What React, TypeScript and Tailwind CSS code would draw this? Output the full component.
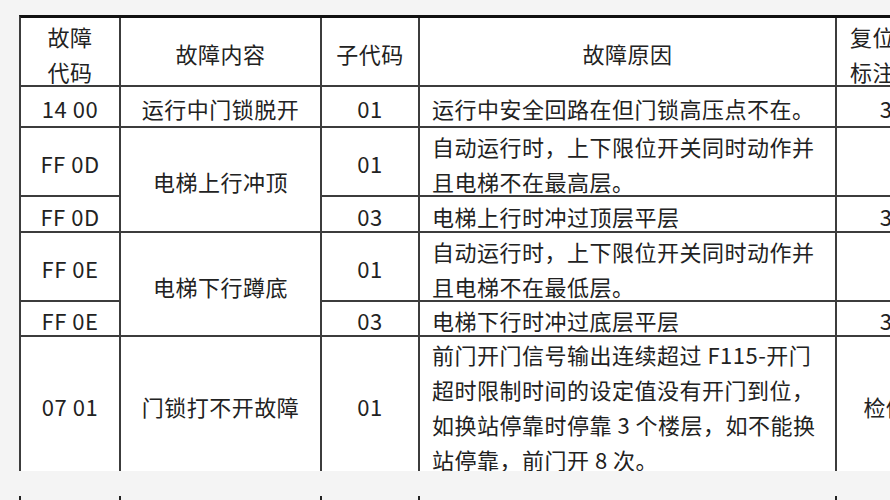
const cols = "grid grid-cols-[100px_201px_98px_417px_100px]";
const cell = "border-r-2 border-b-2 border-[#3c3c3c] flex items-center overflow-hidden pt-[4px]";
const tall = "border-r-2 border-b-2 border-[#3c3c3c] flex items-start overflow-hidden";

function Lines({ lines }: { lines: string[] }) {
  return (
    <div className="flex flex-col">
      {lines.map((l) => (
        <span key={l} className="whitespace-nowrap leading-[35px]">
          {l}
        </span>
      ))}
    </div>
  );
}

export default function App() {
  return (
    <div className="w-[890px] h-[500px] overflow-hidden bg-[#f4f4f4] pt-[15px] pl-[19px] font-['Noto_Sans_CJK_SC','Noto_Sans',sans-serif] text-[22px] tracking-[0.5px] text-[#222]">
      {/* 表格主体（底部被截断） */}
      <div className="h-[456px] w-[940px] overflow-hidden">
        <div
          className={`${cols} grid-rows-[69px_41px_69px_36px_69px_35px_160px] w-[918px] bg-white border-t-[3px] border-l-2 border-t-[#111] border-l-[#3c3c3c]`}
        >
          {/* 表头 */}
          <div className={`${cell} justify-center text-center`}>
            <Lines lines={["故障", "代码"]} />
          </div>
          <div className={`${cell} justify-center`}>故障内容</div>
          <div className={`${cell} justify-center`}>子代码</div>
          <div className={`${cell} justify-center`}>故障原因</div>
          <div className={`${cell} pl-[13px]`}>
            <Lines lines={["复位", "标注"]} />
          </div>

          {/* 14 00 */}
          <div className={`${cell} justify-center`}>14 00</div>
          <div className={`${cell} justify-center`}>运行中门锁脱开</div>
          <div className={`${cell} justify-center`}>01</div>
          <div className={`${cell} pl-[12px] whitespace-nowrap`}>运行中安全回路在但门锁高压点不在。</div>
          <div className={`${cell} justify-center`}>3</div>

          {/* FF 0D */}
          <div className={`${cell} justify-center`}>FF 0D</div>
          <div className={`${cell} justify-center row-span-2`}>电梯上行冲顶</div>
          <div className={`${cell} justify-center`}>01</div>
          <div className={`${cell} pl-[12px]`}>
            <Lines lines={["自动运行时，上下限位开关同时动作并", "且电梯不在最高层。"]} />
          </div>
          <div className={`${cell}`} />
          <div className={`${cell} justify-center`}>FF 0D</div>
          <div className={`${cell} justify-center`}>03</div>
          <div className={`${cell} pl-[12px] whitespace-nowrap`}>电梯上行时冲过顶层平层</div>
          <div className={`${cell} justify-center`}>3</div>

          {/* FF 0E */}
          <div className={`${cell} justify-center`}>FF 0E</div>
          <div className={`${cell} justify-center row-span-2`}>电梯下行蹲底</div>
          <div className={`${cell} justify-center`}>01</div>
          <div className={`${cell} pl-[12px]`}>
            <Lines lines={["自动运行时，上下限位开关同时动作并", "且电梯不在最低层。"]} />
          </div>
          <div className={`${cell}`} />
          <div className={`${cell} justify-center`}>FF 0E</div>
          <div className={`${cell} justify-center`}>03</div>
          <div className={`${cell} pl-[12px] whitespace-nowrap`}>电梯下行时冲过底层平层</div>
          <div className={`${cell} justify-center`}>3</div>

          {/* 07 01 */}
          <div className={`${tall} justify-center pt-[53px]`}>07 01</div>
          <div className={`${tall} justify-center pt-[53px]`}>门锁打不开故障</div>
          <div className={`${tall} justify-center pt-[53px]`}>01</div>
          <div className={`${tall} pl-[12px]`}>
            <Lines
              lines={[
                "前门开门信号输出连续超过 F115-开门",
                "超时限制时间的设定值没有开门到位，",
                "如换站停靠时停靠 3 个楼层，如不能换",
                "站停靠，前门开 8 次。",
              ]}
            />
          </div>
          <div className={`${tall} justify-center pt-[53px]`}>检修</div>
        </div>
      </div>

      {/* 下一段截图的表格边线 */}
      <div className={`${cols} mt-[25px] h-[4px] w-[918px] border-l-2 border-[#222]`}>
        <div className="border-r-2 border-[#222]" />
        <div className="border-r-2 border-[#222]" />
        <div className="border-r-2 border-[#222]" />
        <div className="border-r-2 border-[#222]" />
        <div className="border-r-2 border-[#222]" />
      </div>
    </div>
  );
}
